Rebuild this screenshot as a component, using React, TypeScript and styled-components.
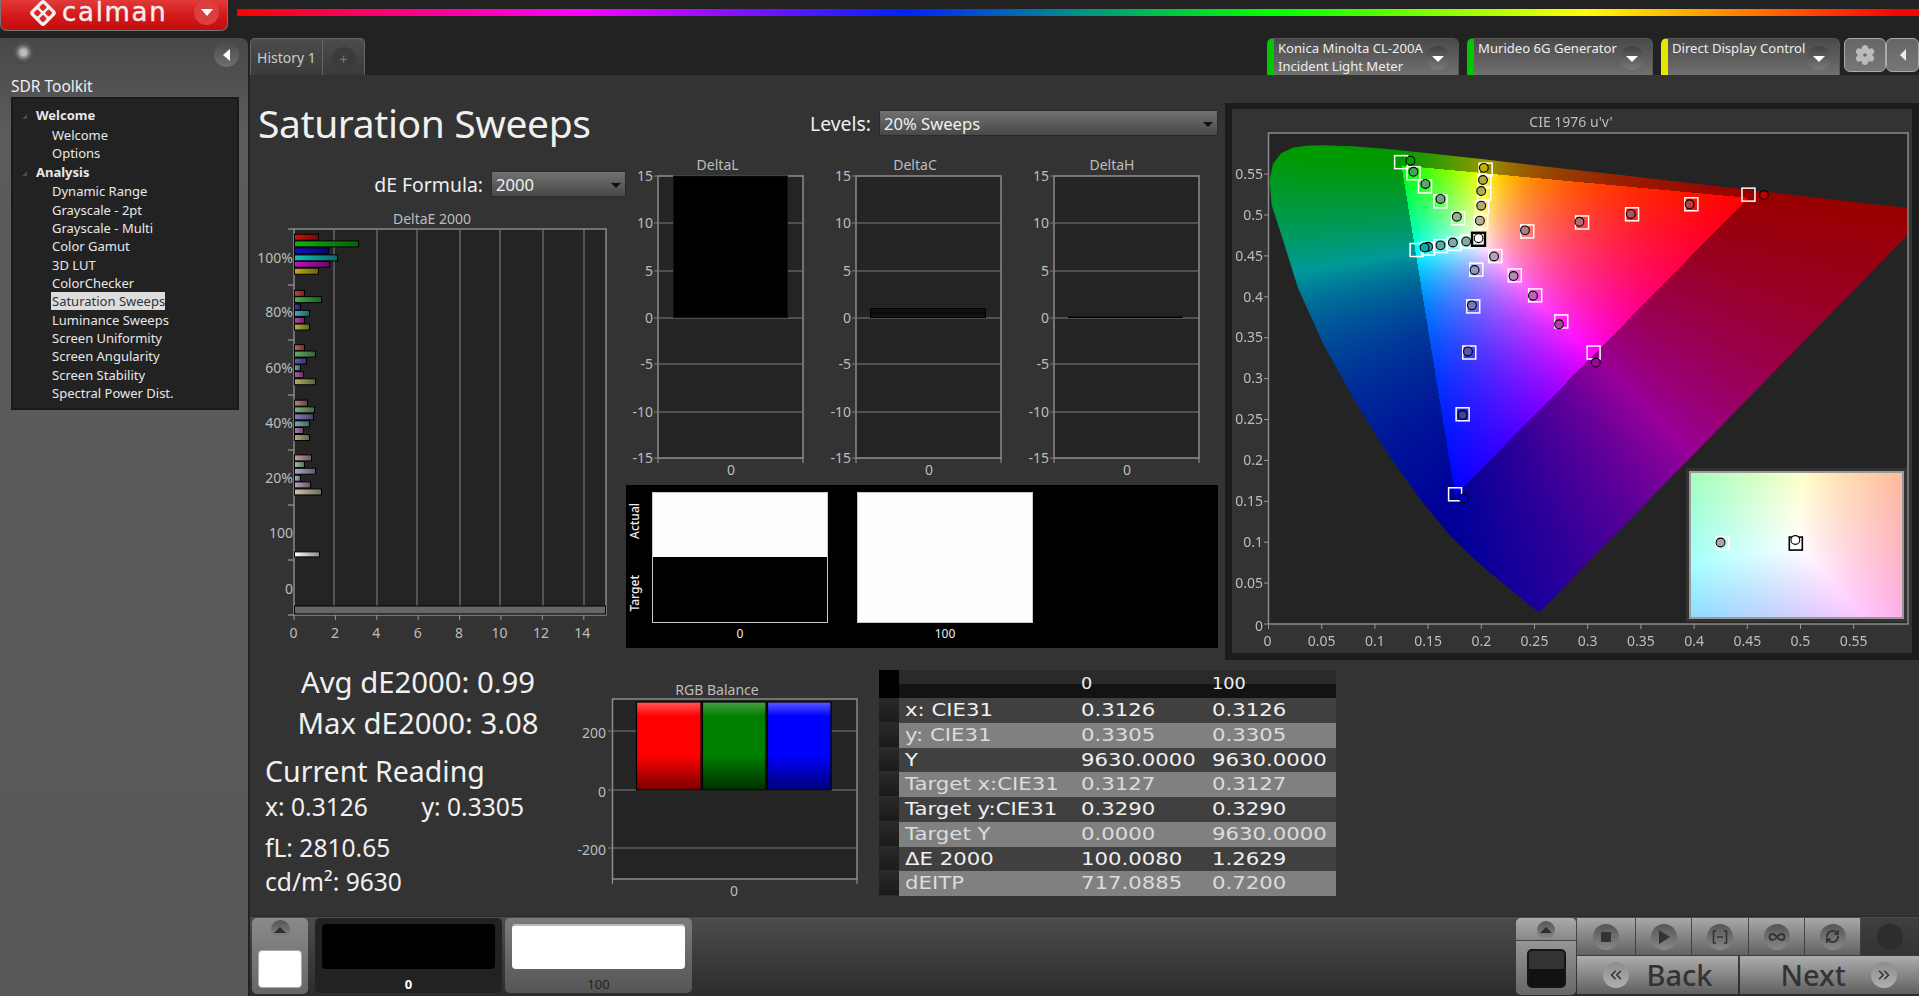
import React, { useLayoutEffect, useRef } from "react";
import styled, { createGlobalStyle } from "styled-components";
import { Settings, Infinity as InfinityIcon, RefreshCw, ChevronsLeft, ChevronsRight } from "lucide-react";

const UI = '"Noto Sans", "Open Sans", sans-serif';

const Global = createGlobalStyle`
  html, body { margin: 0; padding: 0; background: #222; overflow: hidden; }
  * { box-sizing: border-box; }
`;

const Page = styled.div`
  width: 1919px; height: 996px; display: flex; flex-direction: column;
  background: #222; font-family: ${UI}; color: #eee; overflow: hidden;
`;

const TopBar = styled.div`display: flex; height: 32px; flex: none;`;
const LogoButton = styled.div`
  width: 228px; height: 31px; display: flex; align-items: flex-start; padding-left: 27px; position: relative;
  background: linear-gradient(#e23a3a, #d51a1a 50%, #c20d0d); border: 1px solid #777; border-top: 0; border-radius: 0 0 7px 7px;
`;
const LogoText = styled.span`
  font: 400 26px/24px "DejaVu Sans", sans-serif; color: #f6eeee; margin-left: 4px; letter-spacing: 1.7px; -webkit-text-stroke: .4px #f6eeee;
`;
const LogoCaret = styled.div`
  position: absolute; right: 8px; top: 0; width: 25px; height: 25px; border-radius: 50%; background: #dc3f3f;
  display: flex; align-items: center; justify-content: center;
  &::after { content: ""; border: 6px solid transparent; border-top: 7px solid #fff; border-bottom: 0; }
`;
const Rainbow = styled.div`
  flex: 1; height: 7px; margin: 9px 0 0 9px;
  background: linear-gradient(90deg, #f00 0, #f06 130px, #f0f 344px, #02f 669px, #008a90 830px, #0f0 1027px, #0f0 1040px, #ff0 1349px, #f00 1660px);
`;

const Body = styled.div`display: flex; flex: 1; min-height: 0;`;
const Sidebar = styled.aside`
  width: 248px; margin: 6px 2px 0 0; flex: none; border-radius: 0 7px 0 0; padding: 4px 9px 0 11px;
  background: linear-gradient(#484848, #5b5b5b 90px, #585858);
`;
const SideTop = styled.div`display: flex; justify-content: space-between; height: 27px;`;
const Knob = styled.div`
  width: 25px; height: 25px; border-radius: 50%; background: radial-gradient(circle at 50% 42%, #bbb 0 3px, #888 5px, #555 8px, #474747 12px, #505050 13px);
`;
const RoundBack = styled.div`
  width: 25px; height: 25px; border-radius: 50%; background: linear-gradient(#4b4b4b, #6f6f6f); display: flex; align-items: center; justify-content: center;
  &::after { content: ""; border: 6px solid transparent; border-right: 7px solid #fff; border-left: 0; }
`;
const SideTitle = styled.div`font-size: 15.5px; line-height: 20px; margin-top: 7px; color: #eee;`;
const Tree = styled.div`
  margin-top: 1px; height: 313px; width: 228px; background: #222; border: 2px solid #1a1a1a; padding-top: 7px;
`;
const TreeRow = styled.div<{ $head?: boolean }>`
  height: 18.32px; line-height: 18px; font-size: 13px; white-space: nowrap;
  padding-left: ${(p) => (p.$head ? 23 : 39)}px; font-weight: ${(p) => (p.$head ? 700 : 400)};
  margin-bottom: ${(p) => (p.$head ? 1.6 : 0)}px; position: relative; color: #e8e8e8;
  ${(p) => p.$head && `&::before { content: ""; position: absolute; left: 9px; top: 8px; border-style: solid; border-width: 0 0 5px 5px; border-color: transparent transparent #4a4a4a transparent; }`}
`;
const Selected = styled.span`
  display: inline-block; background: #ddd; color: #333; margin-left: -1px; padding: 0 0 0 1px; height: 18px; width: 114px;
`;

const Work = styled.div`flex: 1; min-width: 0; display: flex; flex-direction: column;`;
const TabStrip = styled.div`height: 43px; flex: none; padding-top: 6px; display: flex; align-items: flex-start;`;
const HistoryTab = styled.div`
  width: 73px; height: 37px; background: linear-gradient(#4c4c4c, #3a3a3a); border: 1px solid #666; border-bottom: 0; border-radius: 5px 0 0 0;
  font-size: 14px; line-height: 38px; text-align: center; color: #ccc;
`;
const PlusTab = styled.div`
  width: 42px; height: 37px; background: linear-gradient(#4c4c4c, #3a3a3a); border: 1px solid #666; border-left: 0; border-bottom: 0; border-radius: 0 5px 0 0;
  display: flex; align-items: center; justify-content: center;
`;
const PlusDot = styled.div`
  width: 24px; height: 24px; border-radius: 50%; background: #3b3b3b; color: #777; font-size: 15px; line-height: 25px; text-align: center; margin-top: 3px;
`;
const Grow = styled.div`flex: 1;`;
const Device = styled.div<{ $w: number; $c: string; $gap?: number }>`
  width: ${(p) => p.$w}px; height: 37px; margin-right: ${(p) => p.$gap ?? 8}px; position: relative; flex: none;
  background: linear-gradient(#4a4a4a, #707070); border: 1px solid #555; border-bottom: 0; border-radius: 6px 6px 0 0;
  border-left: 7px solid ${(p) => p.$c}; padding: 0 0 0 4px; font-size: 13.1px; line-height: 18px; color: #eee; white-space: nowrap;
`;
const DeviceCaret = styled.div`
  position: absolute; right: 8px; top: 7px; width: 24px; height: 24px; border-radius: 50%; background: linear-gradient(#414141, #7a7a7a);
  display: flex; align-items: center; justify-content: center;
  &::after { content: ""; border: 6px solid transparent; border-top: 6px solid #fff; border-bottom: 0; margin-top: 2px; }
`;
const SquareBtn = styled.div<{ $w: number }>`
  width: ${(p) => p.$w}px; height: 34px; border: 1px solid #aaa; border-radius: 6px; background: linear-gradient(#666, #777);
  display: flex; align-items: center; justify-content: center; color: #bbb; flex: none;
  svg { fill: #bbb; }
  svg circle { fill: #6a6a6a; }
`;
const BackGlyph = styled.div`
  border: 6px solid transparent; border-right: 6px solid #eee; border-left: 0;
`;

const Content = styled.main`flex: 1; min-height: 0; background: #333; display: flex; flex-direction: column;`;
const TopRow = styled.div`display: flex; height: 590px; flex: none;`;
const ColA = styled.div`width: 376px; flex: none;`;
const Title = styled.h1`
  margin: 23px 0 0 8px; font: 400 39px/50px ${UI}; color: #f0f0f0; white-space: nowrap; letter-spacing: -.4px;
`;
const FormRow = styled.div<{ $top: number }>`
  display: flex; justify-content: flex-end; align-items: center; gap: 8px; margin-top: ${(p) => p.$top}px;
  font-size: 19.4px; color: #eee; height: 26px;
`;
const Select = styled.div<{ $w: number }>`
  width: ${(p) => p.$w}px; height: 100%; padding-left: 4px; border: 1px solid #2a2a2a; position: relative;
  background: linear-gradient(#717171, #484848); font-size: 16.6px; line-height: 25px; color: #f0f0f0;
  &::after { content: ""; position: absolute; right: 4px; top: 11px; border: 5px solid transparent; border-top: 5px solid #111; border-bottom: 0; }
`;
const ChartSvg = styled.svg`
  display: block; flex: none; overflow: visible;
  text { font: 14px ${UI}; fill: #bdbdbd; transform: translateY(1px); }
`;
const DeltaESvg = styled(ChartSvg)`margin-top: 13px;`;
const ColB = styled.div`width: 592px; flex: none; padding-top: 35px;`;
const DeltaRow = styled.div`display: flex; margin-top: 20px;`;
const SwatchPanel = styled.div`
  margin-top: 6px; height: 163px; background: #000; display: flex; gap: 29px; padding: 7px 0 0 26px; position: relative;
`;
const SideLabels = styled.div`
  position: absolute; left: 0; top: 7px; width: 17px; height: 131px; padding: 11px 0; display: flex; flex-direction: column; align-items: center; justify-content: space-between;
  font-size: 12px; color: #eee; font-weight: 500;
`;
const VerticalText = styled.span`writing-mode: vertical-rl; transform: rotate(180deg);`;
const SwatchCol = styled.div`width: 176px; display: flex; flex-direction: column; align-items: center;`;
const Swatch = styled.div<{ $half?: boolean }>`
  width: 100%; height: 131px; border: 1.5px solid #c8c8c8;
  background: ${(p) => (p.$half ? "linear-gradient(#fdfefb 50%, #000 50%)" : "#fdfefb")};
`;
const SwatchLabel = styled.div`font-size: 12px; line-height: 20px; color: #eee; margin-top: 1px;`;
const CieOuter = styled.section`
  margin: 28px 0 0 7px; width: 694px; height: 557px; background: #1c1c1c; padding: 6px 7px;
`;
const CieFrame = styled.div`position: relative; width: 680px; height: 544px; background: #333;`;
const GamutCanvas = styled.canvas`position: absolute; left: 37px; top: 24px;`;
const InsetCanvas = styled.canvas`
  position: absolute; left: 459px; top: 364px; box-shadow: 0 0 0 2px #999, 0 0 0 5px #333;
`;
const OverSvg = styled(ChartSvg)`position: absolute; left: 0; top: 0;`;

const BottomRow = styled.div`display: flex; flex: 1;`;
const Stats = styled.div`width: 320px; flex: none; display: flex; flex-direction: column;`;
const StatLine = styled.div<{ $size: number; $top: number; $center?: boolean }>`
  font-size: ${(p) => p.$size}px; line-height: 34px; height: 34px; margin-top: ${(p) => p.$top}px; white-space: nowrap;
  padding-left: ${(p) => (p.$center ? 16 : 15)}px; text-align: ${(p) => (p.$center ? "center" : "left")}; color: #f0f0f0; display: flex;
  justify-content: ${(p) => (p.$center ? "center" : "flex-start")};
`;
const Coord = styled.span`width: 156.5px;`;
const RgbSvg = styled(ChartSvg)`margin-top: 13px;`;
const TableWrap = styled.div`margin: 5px 0 0 9px; width: 457px; font-family: "DejaVu Sans", sans-serif;`;
const Row = styled.div<{ $alt?: boolean }>`
  display: grid; grid-template-columns: 20px 182px 131px 124px; height: 24.75px; font-size: 18px; line-height: 24.75px;
  color: ${(p) => (p.$alt ? "#dcdcdc" : "#f0f0f0")}; white-space: nowrap; overflow: hidden;
`;
const Cell = styled.div<{ $alt?: boolean; $pad?: number }>`
  background: ${(p) => (p.$alt ? "#808080" : "#404040")}; padding-left: ${(p) => p.$pad ?? 0}px;
`;
const RowHead = styled.div`background: linear-gradient(#2a2a2a, #1a1a1a); border-bottom: 1px solid #2b2b2b;`;
const HeaderRow = styled(Row)`height: 28px; font-size: 15px; line-height: 28px;`;
const HeadCorner = styled.div`background: #000;`;
const HeadCell = styled.div`background: linear-gradient(#2a2a2a 50%, #131313 50%);`;
const Stretch = styled.span`display: inline-block; transform: scaleX(1.18); transform-origin: 0 50%;`;

const BottomBar = styled.footer`
  height: 80px; flex: none; display: flex; padding: 1px 0 2px 2px; background: linear-gradient(#4c4c4c, #2c2c2c);
  border-top: 1px solid #2a2a2a;
`;
const Stack = styled.div`
  width: 56px; height: 76px; border-radius: 5px; background: linear-gradient(#8a8a8a, #666); display: flex; flex-direction: column; align-items: center; padding-top: 2px; flex: none;
`;
const Round = styled.div<{ $size: number; $light?: boolean; $off?: boolean }>`
  width: ${(p) => p.$size}px; height: ${(p) => p.$size}px; border-radius: 50%; flex: none; color: #333;
  background: ${(p) => (p.$off ? "#2d2d2d" : p.$light ? "linear-gradient(#8c8c8c, #b0b0b0)" : "linear-gradient(#555, #888)")};
  display: flex; align-items: center; justify-content: center;
`;
const Up = styled.div`border: 6px solid transparent; border-bottom: 6px solid #2e2e2e; border-top: 0;`;
const MiniWhite = styled.div`width: 44px; height: 38px; margin-top: 11px; background: #fff; border: 1px solid #aaa; border-radius: 4px;`;
const Card = styled.div<{ $on?: boolean }>`
  width: 187px; height: 75px; margin-left: ${(p) => (p.$on ? 3 : 7)}px; border-radius: 5px; flex: none; padding: 6px 7px 0;
  background: ${(p) => (p.$on ? "linear-gradient(#7c7c7c, #555)" : "#222")}; display: flex; flex-direction: column; align-items: center;
`;
const CardFace = styled.div<{ $on?: boolean }>`
  width: 100%; height: 45px; flex: none; border-radius: 4px; background: ${(p) => (p.$on ? "#fff" : "#000")};
  ${(p) => p.$on && "border-top: 2px solid #bbb;"}
`;
const CardLabel = styled.div<{ $on?: boolean }>`
  font-size: 13px; line-height: 18px; margin-top: 6px; font-weight: ${(p) => (p.$on ? 400 : 700)}; color: ${(p) => (p.$on ? "#222" : "#fff")};
`;
const Panel = styled.div`display: flex; flex: none; width: 403px;`;
const StackR = styled.div`
  width: 60px; height: 77px; border-radius: 5px; margin-right: 1px; flex: none; background: linear-gradient(#aaa, #666);
  display: flex; flex-direction: column; align-items: center;
`;
const StackTop = styled.div`height: 23px; width: 100%; border-bottom: 1px solid #444; display: flex; justify-content: center; padding-top: 3px; background: linear-gradient(#aaa, #888); border-radius: 5px 5px 0 0;`;
const DarkBox = styled.div`
  width: 39px; height: 39px; margin-top: 8px; border-radius: 5px; border: 2px solid #151515; background: linear-gradient(#333 50%, #111 50%);
`;
const Controls = styled.div`width: 342px; display: flex; flex-direction: column; gap: 1px;`;
const TransportRow = styled.div`display: flex; height: 38px; gap: 1px;`;
const Transport = styled.div<{ $w: number; $dark?: boolean }>`
  width: ${(p) => p.$w}px; display: flex; align-items: center; justify-content: center; flex: none;
  background: ${(p) => (p.$dark ? "linear-gradient(#3f3f3f, #333)" : "linear-gradient(#a8a8a8, #626262)")};
`;
const NavRow = styled.div`display: flex; height: 38px; gap: 2px;`;
const Nav = styled.div`
  flex: 1; display: flex; align-items: center; justify-content: space-between; padding: 0 18px 0 26px;
  background: linear-gradient(#adadad, #5f5f5f); font-size: 29px; line-height: 38px; color: #333; font-weight: 500;
`;
const BackLabel = styled.span`margin-right: 7px;`;
const NavR = styled(Nav)`padding: 0 22px 0 41px;`;

/* ----- data ----- */
const UV_LOCUS: [number, number][] = [
  [.2568,.0165],[.2557,.0159],[.2522,.0169],[.2461,.0226],[.2349,.0350],[.2266,.0437],[.2161,.0549],[.2033,.0688],[.1877,.0871],[.1690,.1119],[.1441,.1510],[.1147,.2044],[.0828,.2708],[.0521,.3427],[.0282,.4117],[.0114,.4815],[.0035,.5131],[.0014,.5431],[.0046,.5638],[.0123,.5770],[.0231,.5837],[.0360,.5861],[.0501,.5868],[.0792,.5856],[.1127,.5821],[.1531,.5766],[.2026,.5694],[.2623,.5604],[.3315,.5501],[.4035,.5393],[.5203,.5219],[.6005,.5099],[.6234,.5065],
];
const encode = (c: number) => Math.round(255 * Math.pow(Math.max(0, Math.min(1, c)), 1 / 1.05));
function uvColor(u: number, v: number): [number, number, number, boolean] {
  const d = 6 * u - 16 * v + 12;
  const x = (9 * u) / d, y = (4 * v) / d;
  const X = x / y, Z = (1 - x - y) / y;
  const r = 3.2406 * X - 1.5372 - 0.4986 * Z;
  const g = -0.9689 * X + 1.8758 + 0.0415 * Z;
  const b = 0.0557 * X - 0.204 + 1.057 * Z;
  const inside = r >= 0 && g >= 0 && b >= 0;
  const R = Math.max(0, r), G = Math.max(0, g), B = Math.max(0, b);
  const m = Math.max(R, G, B, 1e-6);
  return [encode(R / m), encode(G / m), encode(B / m), inside];
}
function drawGamut(c: HTMLCanvasElement) {
  const ctx = c.getContext("2d")!;
  const img = ctx.createImageData(c.width, c.height);
  for (let py = 0; py < c.height; py++) for (let px = 0; px < c.width; px++) {
    const u = (px + 1) / 1064, v = (c.height - py) / 816;
    const [r, g, b, inside] = uvColor(u, Math.max(v, .001));
    const k = inside ? 1 : 0.6;
    const i = (py * c.width + px) * 4;
    img.data[i] = r * k; img.data[i + 1] = g * k; img.data[i + 2] = b * k; img.data[i + 3] = 255;
  }
  ctx.putImageData(img, 0, 0);
  ctx.globalCompositeOperation = "destination-in";
  ctx.beginPath();
  UV_LOCUS.forEach(([u, v], i) => {
    const X = u * 1064 - 1, Y = c.height - v * 816;
    if (i) ctx.lineTo(X, Y); else ctx.moveTo(X, Y);
  });
  ctx.closePath(); ctx.fill();
  ctx.globalCompositeOperation = "destination-over";
  ctx.fillStyle = "#242424"; ctx.fillRect(0, 0, c.width, c.height);
}
function drawInset(c: HTMLCanvasElement) {
  const ctx = c.getContext("2d")!;
  const img = ctx.createImageData(c.width, c.height);
  for (let py = 0; py < c.height; py++) for (let px = 0; px < c.width; px++) {
    const u = .1978 + (px / c.width - .5) * .038, v = .4683 - (py / c.height - .5) * .031;
    const [r, g, b] = uvColor(u, v);
    const i = (py * c.width + px) * 4;
    img.data[i] = r; img.data[i + 1] = g; img.data[i + 2] = b; img.data[i + 3] = 255;
  }
  ctx.putImageData(img, 0, 0);
}

type P = [number, number];
const Z = (x: number, y: number): P => [x / 2.26 - 7, y / 2.8 - 9];
const series: { c: string[]; s: P[]; o: P[] }[] = [
  { c: ["#c00000", "#b84040", "#b05058", "#b86a70", "#a88088"], s: [[1183,265],[1054,292],[920,320],[807,343],[683,368]], o: [[1218,266],[1050,292],[917,319],[801,341],[678,365]] },
  { c: ["#00a000", "#45a060", "#60a070", "#70a880", "#95b095"], s: [[398,174],[426,205],[452,242],[487,284],[527,331]], o: [[419,170],[426,201],[453,235],[487,277],[524,327]] },
  { c: ["#0000c0", "#4040a0", "#5858a8", "#7878b0", "#9898b8"], s: [[520,1104],[537,880],[552,707],[561,578],[568,475]], o: [[540,1115],[537,882],[549,704],[558,575],[564,476]] },
  { c: ["#c0b000", "#b0a840", "#b0a860", "#b0aa78", "#b8b090"], s: [[589,195],[586,228],[586,262],[581,300],[579,342]], o: [[585,190],[583,224],[579,255],[579,296],[576,338]] },
  { c: ["#a000a0", "#b040a8", "#b868b0", "#b888b8", "#b8a0b8"], s: [[833,707],[760,620],[701,547],[655,491],[611,437]], o: [[838,735],[755,628],[696,548],[652,493],[608,438]] },
  { c: ["#30a0a0", "#10a8a8", "#60a8a8", "#80a8a8", "#88a8a0"], s: [[459,416],[433,420],[487,409],[518,403],[547,396]], o: [[459,411],[451,413],[487,407],[515,399],[545,396]] },
];

const deltaEGroups: { y: number[]; len: number[]; c: string[] }[] = [
  { y: [391,410,430,450,468,488], len: [24,64,34,43,35,24], c: ["#d01010","#10b010","#1010c0","#10c0c0","#c010c0","#c0b010"] },
  { y: [551,569,590,608,628,647], len: [10,27,6,15,10,15], c: ["#c84040","#40b040","#4040b0","#40b0b0","#b840b8","#b8b040"] },
  { y: [706,724,744,763,783,803], len: [10,21,12,6,9,21], c: ["#c06060","#60b060","#6060b0","#60b0b0","#b060b0","#b0b060"] },
  { y: [864,883,903,923,942,962], len: [13,20,19,15,9,15], c: ["#b88080","#80b080","#8080b8","#80b0b0","#b080b0","#b0b080"] },
  { y: [1020,1039,1058,1078,1097,1117], len: [17,10,21,6,16,27], c: ["#c0a0a0","#a0c0a0","#a8a8c8","#a0c0c0","#c0a0c0","#c8c8a8"] },
];

function DeltaEChart() {
  const yt = [229,285,340,395,450,505,560,615].map((v) => v - 210);
  const labs: [string, number][] = [["100%",258.6],["80%",312],["60%",368],["40%",423.5],["20%",478],["100",533],["0",589]];
  const vx = [334,377,417,460,500,543,584].map((v) => v - 250);
  return (
    <DeltaESvg width={376} height={435} viewBox="0 0 376 435">
      <defs>
        <linearGradient id="fadeX"><stop offset="0" stopColor="#000" stopOpacity="0" /><stop offset="1" stopColor="#000" stopOpacity=".45" /></linearGradient>
      </defs>
      <text x={182} y={9} textAnchor="middle" dominantBaseline="middle">DeltaE 2000</text>
      <rect x={44} y={19} width={312} height={386} fill="#242424" stroke="#8a8a8a" strokeWidth={1.5} />
      {vx.map((x) => <line key={x} x1={x} x2={x} y1={19} y2={405} stroke="#777" strokeWidth={1.2} />)}
      {yt.map((y) => <line key={y} x1={38} x2={44} y1={y} y2={y} stroke="#999" strokeWidth={1.2} />)}
      {[0,2,4,6,8,10,12,14].map((n, i) => (
        <g key={n}>
          <line x1={44 + i * 41.4} x2={44 + i * 41.4} y1={405} y2={410} stroke="#999" />
          <text x={43.5 + i * 41.4 - (n > 9 ? 1 : 0)} y={423} textAnchor="middle" dominantBaseline="middle">{n}</text>
        </g>
      ))}
      {labs.map(([t, y]) => <text key={t} x={43} y={y - 210} textAnchor="end" dominantBaseline="middle">{t}</text>)}
      {deltaEGroups.map((g) => g.y.map((z, i) => {
        const y = z / 2.85 + 100 - 210;
        return (
          <g key={z}>
            <rect x={44.5} y={y - 3} width={g.len[i]} height={6} fill={g.c[i]} stroke="#000" />
            <rect x={44.5} y={y - 3} width={g.len[i]} height={6} fill="url(#fadeX)" />
          </g>
        );
      }))}
      <rect x={44.5} y={1295 / 2.85 + 100 - 210 - 2.5} width={25} height={5} fill="#fff" stroke="#000" />
      <rect x={44.5} y={1295 / 2.85 + 100 - 210 - 2.5} width={25} height={5} fill="url(#fadeX)" />
      <rect x={44.5} y={396} width={311} height={8} fill="#666" stroke="#000" />
    </DeltaESvg>
  );
}

const dYs = [20,67,115,162,208,256,302];
const dLabs = ["15","10","5","0","-5","-10","-15"];
function DeltaChart({ title, tx, children }: { title: string; tx: number; children?: React.ReactNode }) {
  return (
    <ChartSvg width={198} height={323} viewBox="0 0 198 323">
      <text x={tx} y={9} textAnchor="middle" dominantBaseline="middle">{title}</text>
      <rect x={32} y={20} width={145} height={282} fill="#242424" stroke="#8a8a8a" strokeWidth={1.5} />
      {dYs.map((y, i) => (
        <g key={y}>
          <line x1={28} x2={177} y1={y} y2={y} stroke="#7c7c7c" strokeWidth={1.2} />
          <text x={27} y={y} textAnchor="end" dominantBaseline="middle">{dLabs[i]}</text>
        </g>
      ))}
      <line x1={32} x2={32} y1={302} y2={307} stroke="#999" />
      <line x1={177} x2={177} y1={302} y2={307} stroke="#999" />
      {children}
      <text x={105} y={314} textAnchor="middle" dominantBaseline="middle">0</text>
    </ChartSvg>
  );
}

function RgbChart() {
  const bars: [number, number, string][] = [[66.5,64.5,"gr"],[132.5,63.5,"gg"],[197.5,63.5,"gb"]];
  return (
    <RgbSvg width={300} height={224} viewBox="0 0 300 224">
      <defs>
        <linearGradient id="gr" x2="0" y2="1"><stop offset="0" stopColor="#ff5a5a" /><stop offset=".16" stopColor="#f00" /><stop offset=".6" stopColor="#f00" /><stop offset="1" stopColor="#7a0000" /></linearGradient>
        <linearGradient id="gg" x2="0" y2="1"><stop offset="0" stopColor="#4aa04a" /><stop offset=".16" stopColor="#008000" /><stop offset=".6" stopColor="#008000" /><stop offset="1" stopColor="#003000" /></linearGradient>
        <linearGradient id="gb" x2="0" y2="1"><stop offset="0" stopColor="#5a5aff" /><stop offset=".16" stopColor="#00f" /><stop offset=".6" stopColor="#00f" /><stop offset="1" stopColor="#000078" /></linearGradient>
      </defs>
      <text x={147} y={12} textAnchor="middle" dominantBaseline="middle">RGB Balance</text>
      <rect x={42.5} y={21} width={244.5} height={180} fill="#242424" stroke="#8a8a8a" strokeWidth={1.5} />
      {[[53,"200"],[112,"0"],[170,"-200"]].map(([y, t]) => (
        <g key={String(t)}>
          <line x1={38} x2={287} y1={y as number} y2={y as number} stroke="#7c7c7c" strokeWidth={1.2} />
          <text x={36} y={(y as number) + 2} textAnchor="end" dominantBaseline="middle">{t}</text>
        </g>
      ))}
      {bars.map(([x, w, id]) => <rect key={id} x={x} y={24} width={w} height={88} fill={`url(#${id})`} stroke="#000" strokeWidth={1.2} />)}
      <line x1={42.5} x2={42.5} y1={201} y2={206} stroke="#999" />
      <line x1={287} x2={287} y1={201} y2={206} stroke="#999" />
      <text x={164} y={213} textAnchor="middle" dominantBaseline="middle">0</text>
    </RgbSvg>
  );
}

function CieChart() {
  const g = useRef<HTMLCanvasElement>(null);
  const i = useRef<HTMLCanvasElement>(null);
  useLayoutEffect(() => {
    if (g.current) drawGamut(g.current);
    if (i.current) drawInset(i.current);
  }, []);
  const xl = ["0","0.05","0.1","0.15","0.2","0.25","0.3","0.35","0.4","0.45","0.5","0.55"];
  const sq = (p: P, k: string, c = "#fff", w = 1.5) => <rect key={k} x={p[0] - 6.5} y={p[1] - 6.5} width={13} height={13} fill="none" stroke={c} strokeWidth={w} />;
  const dot = (p: P, k: string, c: string) => <circle key={k} cx={p[0]} cy={p[1]} r={4.4} fill={c} stroke="#000" strokeWidth={1.1} />;
  return (
    <CieFrame>
      <GamutCanvas ref={g} width={639} height={491} />
      <InsetCanvas ref={i} width={211} height={144} />
      <OverSvg width={680} height={544} viewBox="0 0 680 544">
        <text x={339} y={13} textAnchor="middle" dominantBaseline="middle">CIE 1976 u'v'</text>
        <rect x={36.5} y={24} width={639.5} height={491} fill="none" stroke="#8a8a8a" strokeWidth={1.5} />
        {xl.map((t, k) => (
          <g key={t}>
            <line x1={36.5 + k * 53.2} x2={36.5 + k * 53.2} y1={515} y2={520} stroke="#999" />
            <text x={36.5 + k * 53.2 - (k ? 0 : 1)} y={532} textAnchor="middle" dominantBaseline="middle">{t}</text>
          </g>
        ))}
        {xl.map((t, k) => (
          <g key={t}>
            <line x1={32} x2={36.5} y1={515 - k * 40.9} y2={515 - k * 40.9} stroke="#999" />
            <text x={31} y={515 - k * 40.9 + (k ? 0 : 2)} textAnchor="end" dominantBaseline="middle">{t}</text>
          </g>
        ))}
        {series.map((s, n) => s.s.map(([x, y], k) => sq(Z(x, y), `s${n}${k}`)))}
        {series.map((s, n) => s.o.map(([x, y], k) => dot(Z(x, y), `o${n}${k}`, s.c[k])))}
        {sq(Z(573, 390), "wb", "#000", 2.4)}
        {dot(Z(573, 387), "wd", "#fff")}
        {sq(Z(1124, 1241), "i1")}
        {dot(Z(1120, 1239), "i2", "#a8a8a8")}
        {sq(Z(1290, 1242), "i3", "#000", 1.6)}
        {dot(Z(1289, 1232), "i4", "#fff")}
      </OverSvg>
    </CieFrame>
  );
}

const tree: { t: string; head?: boolean; sel?: boolean }[] = [
  { t: "Welcome", head: true }, { t: "Welcome" }, { t: "Options" }, { t: "Analysis", head: true },
  { t: "Dynamic Range" }, { t: "Grayscale - 2pt" }, { t: "Grayscale - Multi" }, { t: "Color Gamut" }, { t: "3D LUT" },
  { t: "ColorChecker" }, { t: "Saturation Sweeps", sel: true }, { t: "Luminance Sweeps" }, { t: "Screen Uniformity" },
  { t: "Screen Angularity" }, { t: "Screen Stability" }, { t: "Spectral Power Dist." },
];
const rows: [string, string, string][] = [
  ["x: CIE31","0.3126","0.3126"],["y: CIE31","0.3305","0.3305"],["Y","9630.0000","9630.0000"],
  ["Target x:CIE31","0.3127","0.3127"],["Target y:CIE31","0.3290","0.3290"],["Target Y","0.0000","9630.0000"],
  ["ΔE 2000","100.0080","1.2629"],["dEITP","717.0885","0.7200"],
];

export default function App() {
  return (
    <Page>
      <Global />
      <TopBar>
        <LogoButton>
          <svg width="30" height="28" viewBox="0 0 30 28" style={{ marginTop: -1, flex: "none" }}>
            <g transform="rotate(45 15 14)">
              <rect x="5" y="4" width="20" height="20" rx="3.5" fill="#f6eeee" />
              <g fill="#d92626">
                <rect x="8.2" y="7.2" width="5.6" height="5.6" rx="1.2" />
                <rect x="16.2" y="7.2" width="5.6" height="5.6" rx="1.2" />
                <rect x="8.2" y="15.2" width="5.6" height="5.6" rx="1.2" />
                <rect x="16.2" y="15.2" width="5.6" height="5.6" rx="1.2" />
              </g>
            </g>
          </svg>
          <LogoText>calman</LogoText>
          <LogoCaret />
        </LogoButton>
        <Rainbow />
      </TopBar>
      <Body>
        <Sidebar>
          <SideTop><Knob /><RoundBack /></SideTop>
          <SideTitle>SDR Toolkit</SideTitle>
          <Tree>
            {tree.map((r, i) => (
              <TreeRow key={i} $head={r.head}>{r.sel ? <Selected>{r.t}</Selected> : r.t}</TreeRow>
            ))}
          </Tree>
        </Sidebar>
        <Work>
          <TabStrip>
            <HistoryTab>History 1</HistoryTab>
            <PlusTab><PlusDot>+</PlusDot></PlusTab>
            <Grow />
            <Device $w={192} $c="#00c800">Konica Minolta CL-200A<br />Incident Light Meter<DeviceCaret /></Device>
            <Device $w={186} $c="#00c800">Murideo 6G Generator<DeviceCaret /></Device>
            <Device $w={179} $c="#e6e600" $gap={4}>Direct Display Control<DeviceCaret /></Device>
            <SquareBtn $w={42}><Settings size={22} strokeWidth={2} /></SquareBtn>
            <SquareBtn $w={33}><BackGlyph /></SquareBtn>
          </TabStrip>
          <Content>
            <TopRow>
              <ColA>
                <Title>Saturation Sweeps</Title>
                <FormRow $top={23}>dE Formula:<Select $w={135}>2000</Select></FormRow>
                <DeltaEChart />
              </ColA>
              <ColB>
                <FormRow $top={0}>Levels:<Select $w={339}>20% Sweeps</Select></FormRow>
                <DeltaRow>
                  <DeltaChart title="DeltaL" tx={91.6}>
                    <rect x={47.5} y={20} width={114} height={141.5} fill="#000" stroke="#111" />
                  </DeltaChart>
                  <DeltaChart title="DeltaC" tx={91}>
                    <rect x={46.5} y={152.5} width={115} height={9} fill="#111" stroke="#000" />
                    <line x1={47} x2={161} y1={157} y2={157} stroke="#000" />
                  </DeltaChart>
                  <DeltaChart title="DeltaH" tx={90}>
                    <rect x={46} y={160.5} width={114.6} height={1.5} fill="#000" />
                  </DeltaChart>
                </DeltaRow>
                <SwatchPanel>
                  <SideLabels>
                    <VerticalText>Actual</VerticalText>
                    <VerticalText>Target</VerticalText>
                  </SideLabels>
                  <SwatchCol><Swatch $half /><SwatchLabel>0</SwatchLabel></SwatchCol>
                  <SwatchCol><Swatch /><SwatchLabel>100</SwatchLabel></SwatchCol>
                </SwatchPanel>
              </ColB>
              <CieOuter><CieChart /></CieOuter>
            </TopRow>
            <BottomRow>
              <Stats>
                <StatLine $size={29.3} $top={0} $center>Avg dE2000: 0.99</StatLine>
                <StatLine $size={29.3} $top={7} $center>Max dE2000: 3.08</StatLine>
                <StatLine $size={28.5} $top={14}>Current Reading</StatLine>
                <StatLine $size={24.6} $top={2}><Coord>x: 0.3126</Coord><span>y: 0.3305</span></StatLine>
                <StatLine $size={24.6} $top={7}>fL: 2810.65</StatLine>
                <StatLine $size={24.6} $top={0}>cd/m²: 9630</StatLine>
              </Stats>
              <RgbChart />
              <TableWrap>
                <HeaderRow>
                  <HeadCorner />
                  <HeadCell />
                  <HeadCell><Stretch>0</Stretch></HeadCell>
                  <HeadCell><Stretch>100</Stretch></HeadCell>
                </HeaderRow>
                {rows.map(([a, b, c], i) => (
                  <Row key={a} $alt={i % 2 === 1}>
                    <RowHead />
                    <Cell $alt={i % 2 === 1} $pad={6}><Stretch>{a}</Stretch></Cell>
                    <Cell $alt={i % 2 === 1}><Stretch>{b}</Stretch></Cell>
                    <Cell $alt={i % 2 === 1}><Stretch>{c}</Stretch></Cell>
                  </Row>
                ))}
              </TableWrap>
            </BottomRow>
          </Content>
          <BottomBar>
            <Stack>
              <Round $size={19}><Up /></Round>
              <MiniWhite />
            </Stack>
            <Card><CardFace /><CardLabel>0</CardLabel></Card>
            <Card $on><CardFace $on /><CardLabel $on>100</CardLabel></Card>
            <Grow />
            <Panel>
              <StackR>
                <StackTop><Round $size={18}><Up /></Round></StackTop>
                <DarkBox />
              </StackR>
              <Controls>
                <TransportRow>
                  <Transport $w={58}><Round $size={26}><svg width="10" height="10"><rect width="10" height="10" fill="#333" /></svg></Round></Transport>
                  <Transport $w={55}><Round $size={26}><svg width="12" height="14"><path d="M1 0l11 7-11 7z" fill="#333" /></svg></Round></Transport>
                  <Transport $w={56}><Round $size={26}><svg width="16" height="14" fill="none" stroke="#333" strokeWidth="1.6"><path d="M4 1H1.5v12H4M12 1h2.5v12H12M5 7h6" /></svg></Round></Transport>
                  <Transport $w={55}><Round $size={26}><InfinityIcon size={18} strokeWidth={2.4} /></Round></Transport>
                  <Transport $w={55}><Round $size={26}><RefreshCw size={15} strokeWidth={2.8} /></Round></Transport>
                  <Transport $w={58} $dark><Round $size={26} $off /></Transport>
                </TransportRow>
                <NavRow>
                  <Nav><Round $size={26} $light><ChevronsLeft size={18} strokeWidth={2} /></Round><BackLabel>Back</BackLabel></Nav>
                  <NavR><span>Next</span><Round $size={26} $light><ChevronsRight size={18} strokeWidth={2} /></Round></NavR>
                </NavRow>
              </Controls>
            </Panel>
          </BottomBar>
        </Work>
      </Body>
    </Page>
  );
}
